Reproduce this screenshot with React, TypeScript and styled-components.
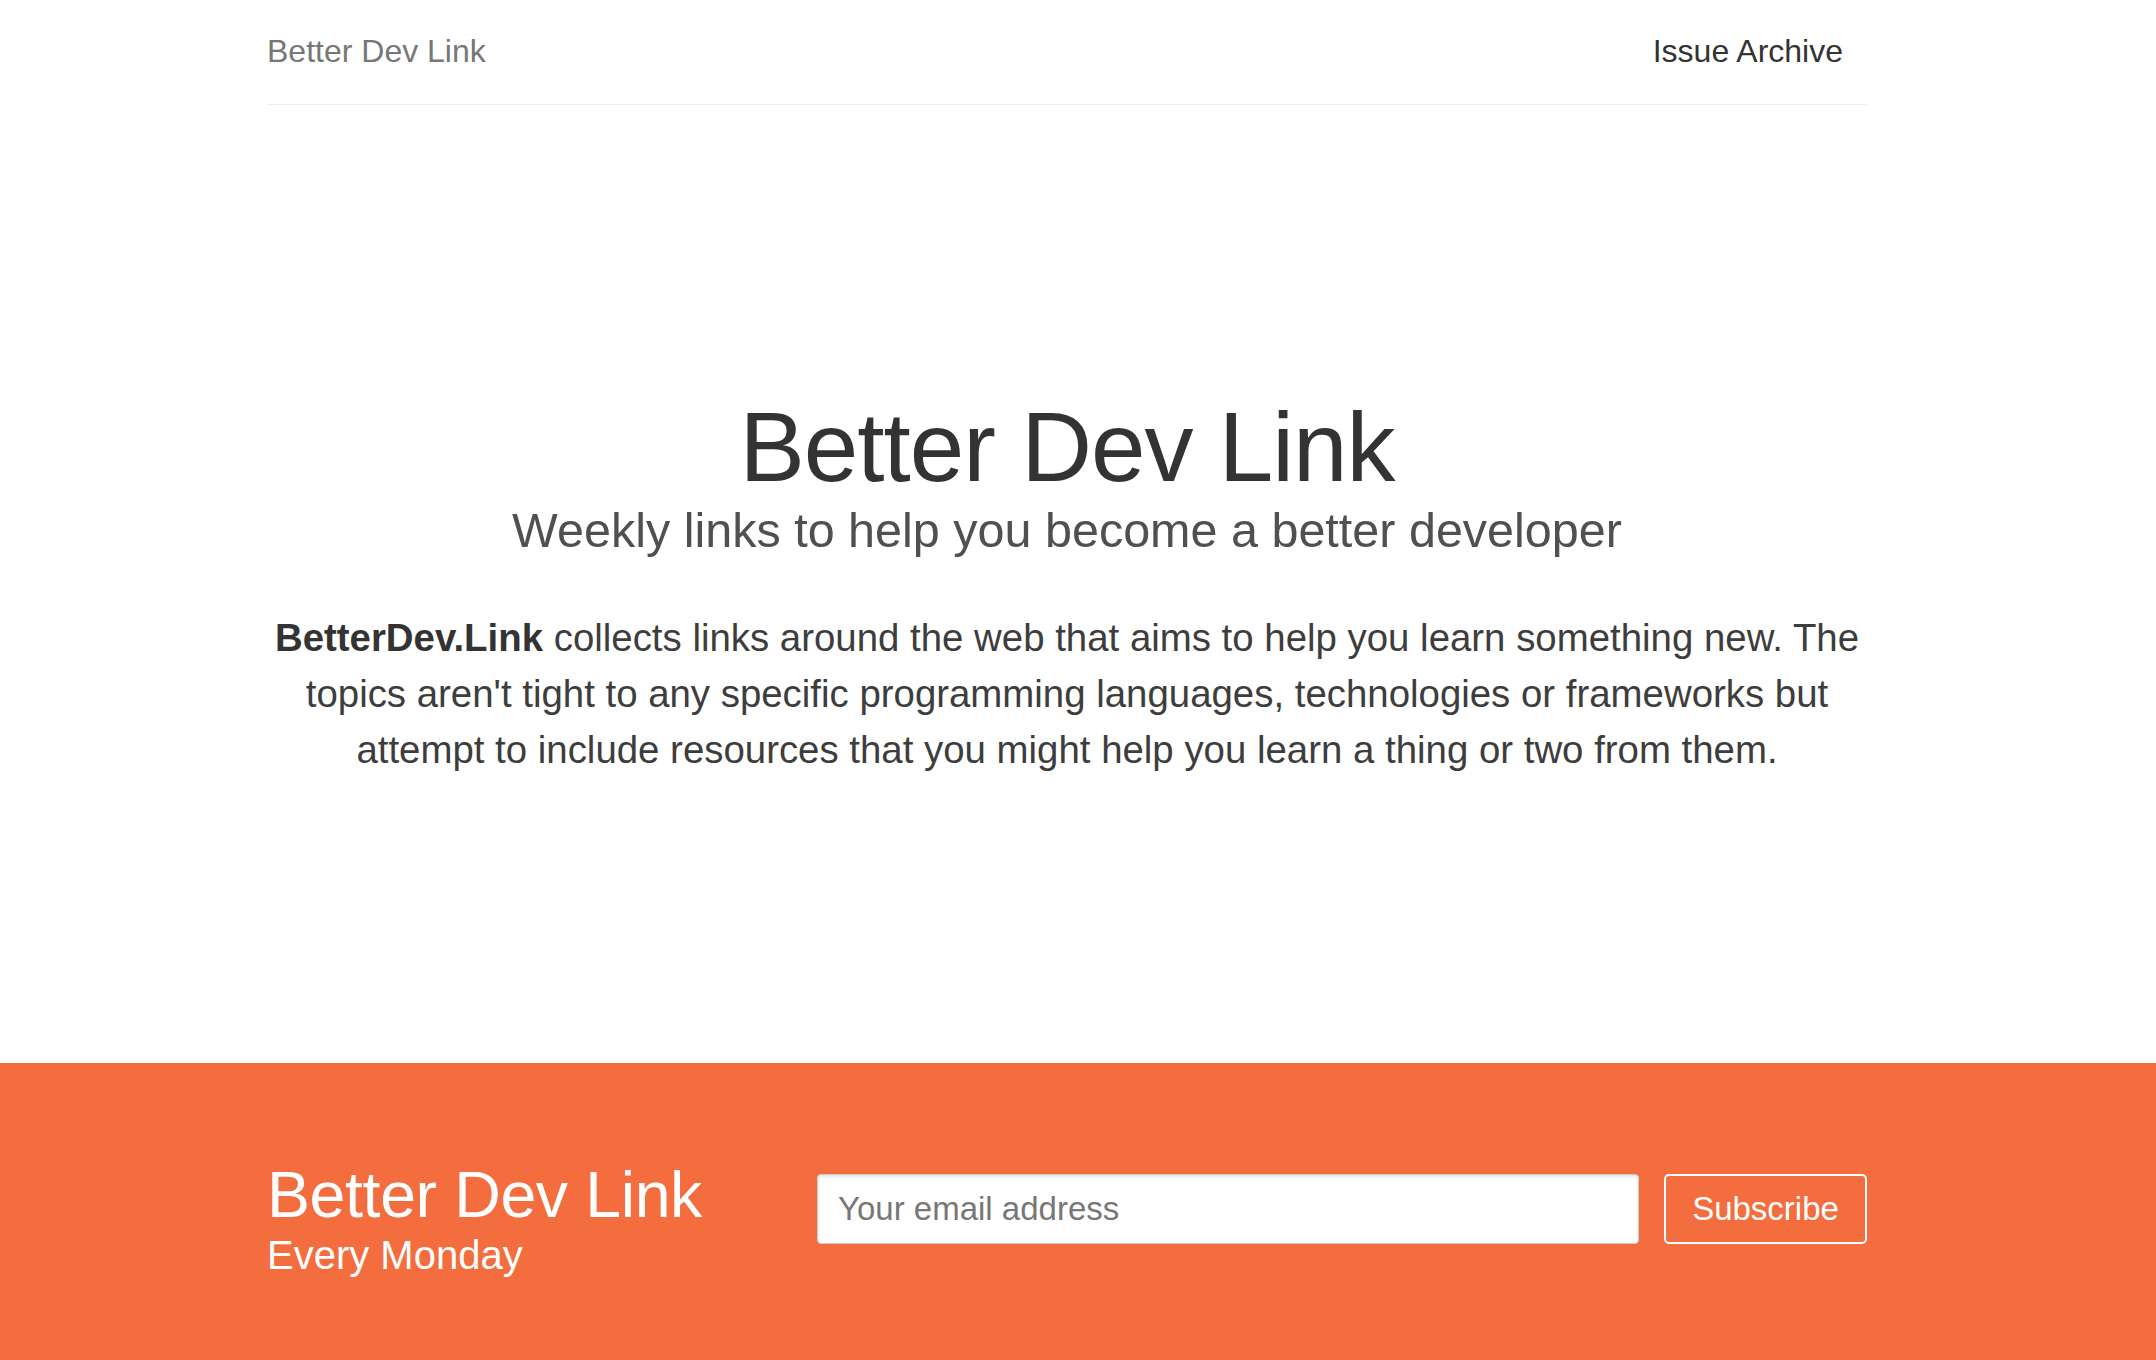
import React from "react";
import styled, { createGlobalStyle } from "styled-components";

const GlobalStyle = createGlobalStyle`
  html, body {
    margin: 0;
    padding: 0;
    background: #ffffff;
    font-family: "Liberation Sans", Arial, Helvetica, sans-serif;
    color: #333333;
  }
  * { box-sizing: border-box; }
`;

const Container = styled.div`
  width: 1600px;
  margin-left: calc(50% - 811px);
`;

const Header = styled.header`
  height: 105px;
  display: flex;
  align-items: center;
  justify-content: space-between;
  border-bottom: 1px solid #eeeeee;
  padding: 0 0 2px 0;
`;

const Brand = styled.a`
  font-size: 32px;
  color: #777777;
  text-decoration: none;
`;

const NavLink = styled.a`
  font-size: 32px;
  color: #333333;
  text-decoration: none;
  margin-right: 24px;
`;

const Hero = styled.section`
  height: 958px;
  display: flex;
  flex-direction: column;
  justify-content: center;
  align-items: center;
  text-align: center;
  padding-top: 2px;
`;

const Title = styled.h1`
  margin: 0;
  font-size: 98px;
  line-height: 108px;
  font-weight: 400;
  letter-spacing: -1px;
  color: #333333;
`;

const Subtitle = styled.h2`
  margin: 0;
  font-size: 48.5px;
  line-height: 58px;
  font-weight: 400;
  color: #505050;
`;

const Intro = styled.p`
  margin: 51px 0 0 0;
  font-size: 38.4px;
  line-height: 56px;
  color: #3d3d3d;
  strong { font-weight: 700; color: #333; }
`;

const Footer = styled.footer`
  background: #f36d3e;
  padding: 97px 0 120px 0;
  min-height: 297px;
`;

const FooterGrid = styled.div`
  display: grid;
  grid-template-columns: 550px 1fr;
  align-items: start;
`;

const FooterBrand = styled.div`
  display: flex;
  flex-direction: column;
  color: #ffffff;
`;

const FooterTitle = styled.div`
  font-size: 64.5px;
  line-height: 70px;
  letter-spacing: -0.4px;
`;

const FooterSub = styled.div`
  font-size: 40px;
  line-height: 50px;
`;

const Form = styled.form`
  display: flex;
  gap: 25px;
  padding-top: 14px;
`;

const EmailInput = styled.input`
  flex: 1;
  height: 70px;
  padding: 0 20px;
  font-family: "Liberation Sans", Arial, sans-serif;
  font-size: 33px;
  color: #555;
  background: #ffffff;
  border: 1px solid #cccccc;
  border-radius: 4px;
  box-shadow: inset 0 2px 3px rgba(0, 0, 0, 0.1);
  outline: none;
  &::placeholder { color: #777777; }
`;

const SubscribeButton = styled.button`
  width: 203px;
  height: 70px;
  font-family: "Liberation Sans", Arial, sans-serif;
  font-size: 33px;
  color: #ffffff;
  background: transparent;
  border: 2px solid #ffffff;
  border-radius: 5px;
  cursor: pointer;
`;

export default function App() {
  return (
    <>
      <GlobalStyle />
      <Container>
        <Header>
          <Brand href="#">Better Dev Link</Brand>
          <NavLink href="#">Issue Archive</NavLink>
        </Header>
        <Hero>
          <Title>Better Dev Link</Title>
          <Subtitle>Weekly links to help you become a better developer</Subtitle>
          <Intro>
            <strong>BetterDev.Link</strong> collects links around the web that aims to help you learn something new. The
            topics aren't tight to any specific programming languages, technologies or frameworks but attempt to include
            resources that you might help you learn a thing or two from them.
          </Intro>
        </Hero>
      </Container>
      <Footer>
        <Container>
          <FooterGrid>
            <FooterBrand>
              <FooterTitle>Better Dev Link</FooterTitle>
              <FooterSub>Every Monday</FooterSub>
            </FooterBrand>
            <Form onSubmit={(e) => e.preventDefault()}>
              <EmailInput type="email" placeholder="Your email address" />
              <SubscribeButton type="submit">Subscribe</SubscribeButton>
            </Form>
          </FooterGrid>
        </Container>
      </Footer>
    </>
  );
}
